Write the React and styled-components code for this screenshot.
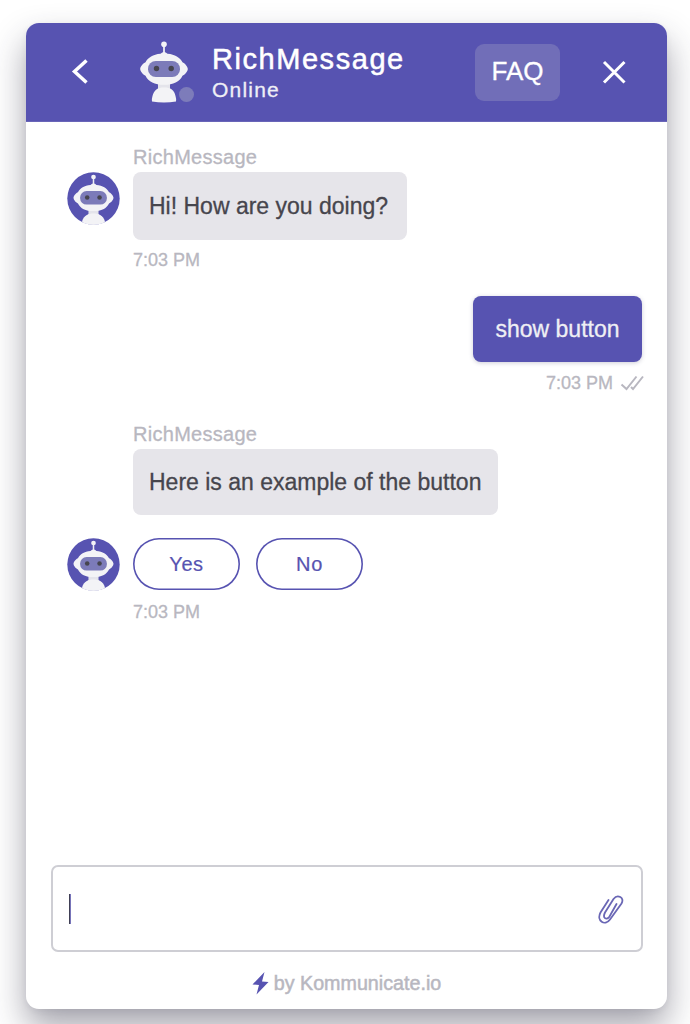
import React from "react";
import styled, { createGlobalStyle } from "styled-components";

const purple = "#5753b1";

const GlobalStyle = createGlobalStyle`
  * { box-sizing: border-box; }
  body {
    margin: 0;
    background: #fff;
    font-family: "Liberation Sans", Arial, sans-serif;
    overflow: hidden;
  }
`;

const Page = styled.main`
  height: 1024px;
  padding: 23px 23px 15px 26px;
  overflow: hidden;
`;

const Card = styled.section`
  display: flex;
  flex-direction: column;
  width: 641px;
  height: 986px;
  border-radius: 13px;
  background: #fff;
  box-shadow: 0 18px 34px rgba(40, 38, 60, 0.42), 0 2px 6px rgba(40, 38, 60, 0.06);
`;

const Header = styled.header`
  display: flex;
  align-items: center;
  flex: none;
  height: 99px;
  padding: 0 40px 0 43px;
  border-radius: 13px 13px 0 0;
  background: ${purple};
  color: #fff;
  border-bottom: 1px solid #6965b8;
`;

const IconButton = styled.button`
  display: flex;
  padding: 0;
  border: 0;
  background: none;
  color: inherit;
`;

const BotFace = styled.div`
  position: relative;
  width: 60px;
  height: 66px;
  margin: 0 0 3px 43px;
`;

const Status = styled.span`
  position: absolute;
  right: 0;
  bottom: 2px;
  width: 15px;
  height: 15px;
  border-radius: 50%;
  background: #7d7cba;
`;

const Titles = styled.div`
  flex: 1;
  margin-left: 18px;
`;

const Title = styled.h1`
  margin: 0;
  font-size: 29px;
  line-height: 34px;
  font-weight: 400;
  letter-spacing: 1.55px;
  -webkit-text-stroke: 0.5px #fff;
`;

const Subtitle = styled.div`
  padding-top: 1px;
  font-size: 21px;
  line-height: 26px;
  letter-spacing: 1.2px;
  color: #efeff6;
  -webkit-text-stroke: 0.3px #efeff6;
`;

const Faq = styled.button`
  width: 85px;
  height: 57px;
  margin: 1px 41px 0 0;
  padding: 0 0 3px;
  border: 0;
  border-radius: 9px;
  background: #716eb8;
  color: #fff;
  font: 26px "Liberation Sans", Arial, sans-serif;
  -webkit-text-stroke: 0.3px #fff;
`;

const Messages = styled.div`
  flex: 1;
  display: flex;
  flex-direction: column;
  padding: 25px 25px 0 41px;
`;

const Incoming = styled.div`
  display: grid;
  grid-template-columns: 53px 1fr;
  column-gap: 13px;
  justify-items: start;
  padding-top: ${(p) => p.$top || 0}px;
`;

const Sender = styled.div`
  grid-column: 2;
  height: 25px;
  font-size: 20px;
  line-height: 21px;
  letter-spacing: 0.28px;
  color: #b8b7c0;
  -webkit-text-stroke: 0.3px #b8b7c0;
`;

const Avatar = styled.div`
  grid-column: 1;
  width: 53px;
  height: 53px;
`;

const Bubble = styled.div`
  grid-column: 2;
  display: flex;
  align-items: center;
  width: ${(p) => p.$width}px;
  height: ${(p) => p.$height}px;
  padding: 0 0 0 16px;
  border-radius: 8px;
  background: #e6e5ea;
  color: #46454d;
  font-size: 23px;
  white-space: nowrap;
  -webkit-text-stroke: 0.3px #46454d;
`;

const Time = styled.div`
  grid-column: 2;
  display: flex;
  align-items: center;
  gap: 7px;
  height: 22px;
  margin-top: ${(p) => p.$top}px;
  font-size: 18px;
  line-height: 22px;
  color: #b8b7c0;
  -webkit-text-stroke: 0.3px #b8b7c0;
`;

const Outgoing = styled.div`
  display: flex;
  flex-direction: column;
  align-items: flex-end;
  margin: 25px 0 30px;

  ${Time} {
    margin-right: -2px;
  }
`;

const OwnBubble = styled.div`
  display: flex;
  align-items: center;
  justify-content: center;
  width: 169px;
  height: 66px;
  border-radius: 8px;
  background: ${purple};
  box-shadow: 0 1px 4px rgba(60, 58, 100, 0.25);
  color: #efeff4;
  font-size: 23px;
  -webkit-text-stroke: 0.3px #efeff4;
`;

const Replies = styled.div`
  display: flex;
  gap: 16px;
`;

const Reply = styled.button`
  width: 107px;
  height: 52px;
  padding: 0;
  border: 0;
  border-radius: 27px;
  box-shadow: inset 0 0 0 1.6px ${purple};
  background: #fff;
  color: ${purple};
  font: 20px "Liberation Sans", Arial, sans-serif;
  letter-spacing: 0.6px;
  -webkit-text-stroke: 0.2px ${purple};
`;

const Composer = styled.div`
  display: flex;
  align-items: center;
  justify-content: space-between;
  flex: none;
  height: 87px;
  margin: 0 24px 0 25px;
  padding: 0 17px 0 16px;
  border: 2px solid #ceced4;
  border-radius: 7px;
`;

const Caret = styled.span`
  width: 2px;
  height: 30px;
  background: linear-gradient(90deg, #403f55 50%, #7774b9 50%);
`;

const ClipIcon = styled.svg`
  margin-top: 3px;
`;

const Footer = styled.footer`
  display: flex;
  align-items: center;
  justify-content: center;
  gap: 5px;
  flex: none;
  height: 57px;
  padding: 5px 0 0 0;
  color: #b8b7c0;
  font-size: 19.7px;
  -webkit-text-stroke: 0.5px #b8b7c0;
`;

function BotHead() {
  return (
    <>
      <path d="M30 8v11" stroke="#eeeef3" strokeWidth="1.8" />
      <circle cx="30" cy="6.2" r="2.8" fill="#f3f3f6" />
      <path d="M24 42h12v10H24z" fill="#e4e4eb" />
      <path d="M18 63.500Q17.500 61 18.500 58C20 52 23.500 49.500 30 49.500S40.500 52 41.500 58Q42.500 61 42 63.500Q30 65.500 18 63.500Z" fill="#f3f3f6" />
      <path d="M26.5 15.8Q30 12.3 33.5 15.8C41 16.5 46 19.5 48.5 24.3C50.5 25 53.8 28.5 53.8 31S50.5 37 48.5 37.7C45.5 43.8 39.5 46.8 30 46.8S14.5 43.8 11.5 37.7C9.5 37 6.2 33.5 6.2 31S9.5 25 11.5 24.3C14 19.5 19 16.5 26.5 15.8Z" fill="#f3f3f6" />
      <rect x="14" y="23" width="32" height="16" rx="7.8" fill="#7c7bb9" />
      <circle cx="22.5" cy="30.5" r="2.7" fill="#46454f" />
      <circle cx="37.2" cy="30.5" r="2.7" fill="#46454f" />
    </>
  );
}

function BotAvatar({ clipName }) {
  return (
    <Avatar>
      <svg width="53" height="53" viewBox="0 0 53 53">
        <clipPath id={clipName}>
          <circle cx="26.5" cy="26.5" r="26.2" />
        </clipPath>
        <g clipPath={`url(#${clipName})`}>
          <rect width="53" height="53" fill={purple} />
          <ellipse cx="26.5" cy="51" rx="11.5" ry="10" fill="#f3f3f6" />
          <g transform="translate(1.3 -.2) scale(.84)">
            <BotHead />
          </g>
        </g>
      </svg>
    </Avatar>
  );
}

export default function App() {
  return (
    <>
      <GlobalStyle />
      <Page>
        <Card>
          <Header>
            <IconButton aria-label="Back">
              <svg width="22" height="26" viewBox="0 0 22 26" fill="none" stroke="currentColor" strokeWidth="3.5">
                <path d="M17.5 1.500 5.5 12.5l12 11" />
              </svg>
            </IconButton>
            <BotFace>
              <svg width="60" height="66" viewBox="0 0 60 66">
                <BotHead />
              </svg>
              <Status />
            </BotFace>
            <Titles>
              <Title>RichMessage</Title>
              <Subtitle>Online</Subtitle>
            </Titles>
            <Faq>FAQ</Faq>
            <IconButton aria-label="Close">
              <svg width="26" height="26" viewBox="0 0 26 26" fill="none" stroke="currentColor" strokeWidth="3">
                <path d="m3 3 20.5 20.5M23.5 3 3 23.5" />
              </svg>
            </IconButton>
          </Header>

          <Messages>
            <Incoming>
              <Sender>RichMessage</Sender>
              <BotAvatar clipName="bot-greeting" />
              <Bubble $width={274} $height={68}>Hi! How are you doing?</Bubble>
              <Time $top={9}>7:03 PM</Time>
            </Incoming>

            <Outgoing>
              <OwnBubble>show button</OwnBubble>
              <Time $top={10}>
                7:03 PM
                <svg width="24" height="16" viewBox="0 0 24 16" fill="none" stroke="#b8b7c0" strokeWidth="2">
                  <path d="m1.5 9.5 5 4.5L16.5 1.5M11 12l2 2L23 1.5" />
                </svg>
              </Time>
            </Outgoing>

            <Incoming>
              <Sender>RichMessage</Sender>
              <Bubble $width={365} $height={66}>Here is an example of the button</Bubble>
            </Incoming>
            <Incoming $top={23}>
              <BotAvatar clipName="bot-choices" />
              <Replies>
                <Reply>Yes</Reply>
                <Reply>No</Reply>
              </Replies>
              <Time $top={10}>7:03 PM</Time>
            </Incoming>
          </Messages>

          <Composer>
            <Caret />
            <ClipIcon width="28" height="32" viewBox="0 0 28 32" fill="none" stroke="#6a67b5" strokeWidth="1.8" strokeLinecap="round">
              <path d="M12.5 6 4.5 18.5C0 27 9 32.500 14 25.500L25.5 9.500C29 3.500 21.5-.2 17.5 5L9 18.500C6 24.500 11 26.500 13.500 22.500L20.500 10" />
            </ClipIcon>
          </Composer>
          <Footer>
            <svg width="17" height="23" viewBox="0 0 17 23" fill={purple}>
              <path d="M12.5 0 .5 12.5 7 13 4.5 22.5 16.5 10 10 9.500Z" />
            </svg>
            <span>by Kommunicate.io</span>
          </Footer>
        </Card>
      </Page>
    </>
  );
}
